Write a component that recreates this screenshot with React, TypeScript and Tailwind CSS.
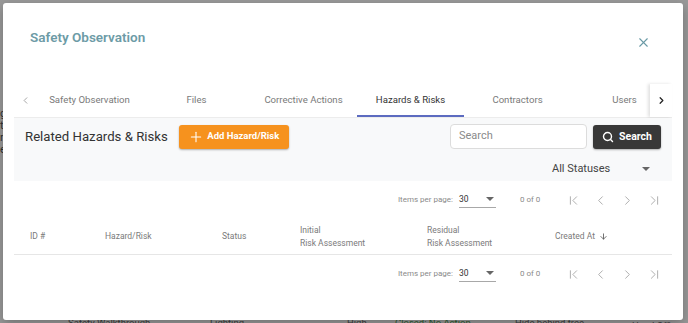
import React from "react";
import { ChevronLeft, ChevronRight, ChevronFirst, ChevronLast, Search, Plus, X, ArrowDown } from "lucide-react";

const Caret = ({ className = "" }: { className?: string }) => (
  <svg width="8" height="4" viewBox="0 0 8 4" className={className}>
    <path d="M0 0 L8 0 L4 4 Z" fill="currentColor" />
  </svg>
);

const Paginator = () => (
  <div className="flex items-center justify-end whitespace-nowrap pr-[4px] text-[8px] text-[#8a8a8a]">
    <span>Items per page:</span>
    <div className="ml-[6px] flex w-[37px] items-center justify-between border-b border-[#a8a8a8] pb-[2px] pt-[1px] text-[8.5px] text-[#333]">
      <span>30</span>
      <Caret className="mr-[2px] text-[#666]" />
    </div>
    <span className="ml-[24px] w-[22px] text-[8px]">0 of 0</span>
    <div className="ml-[18px] flex items-center text-[#aaa]">
      <span className="flex w-[27px] justify-center"><ChevronFirst size={15} strokeWidth={1.5} /></span>
      <span className="flex w-[27px] justify-center"><ChevronLeft size={15} strokeWidth={1.5} /></span>
      <span className="flex w-[27px] justify-center"><ChevronRight size={15} strokeWidth={1.5} /></span>
      <span className="flex w-[27px] justify-center"><ChevronLast size={15} strokeWidth={1.5} /></span>
    </div>
  </div>
);

export default function App() {
  const tabs = ["Safety Observation", "Files", "Corrective Actions", "Hazards & Risks", "Contractors", "Users"];
  return (
    <div className="relative h-[323px] w-[688px] overflow-hidden bg-[#999999]" style={{ fontFamily: "Roboto, 'Liberation Sans', sans-serif" }}>
      {/* background page fragments */}
      <div className="absolute left-0 top-[316px] h-[14px] w-full whitespace-nowrap text-[9.5px] text-[#3d3d3d]">
        <span className="absolute left-[68px] top-0">Safety Walkthrough</span>
        <span className="absolute left-[210px] top-0">Lighting</span>
        <span className="absolute left-[347px] top-0">High</span>
        <span className="absolute left-[395px] top-0 text-[#2f5a2f]">Closed: No Action</span>
        <span className="absolute left-[515px] top-0">Hide behind tree</span>
        <span className="absolute left-[632px] top-[3px]">Head Office</span>
      </div>
      <div className="absolute left-0 top-[108px] flex flex-col text-[11px] leading-[12px] text-[#333]">
        <span>g</span><span>t</span><span>r</span><span>e</span>
      </div>

      {/* modal */}
      <div className="absolute left-[3px] top-[3px] flex h-[317px] w-[680px] flex-col rounded-[3px] bg-white px-[11px] shadow-[0_4px_12px_rgba(0,0,0,0.25)]">
        {/* header */}
        <div className="flex h-[81px] items-start justify-between">
          <div className="ml-[16px] mt-[24px] text-[13.5px] font-semibold leading-[20px] text-[#6d9ba6]">Safety Observation</div>
          <X size={15} strokeWidth={1.8} className="mr-[21px] mt-[32px] text-[#6a9aa6]" />
        </div>

        {/* tabs */}
        <div className="flex h-[34px] border-b border-[#ececec]">
          <div className="flex w-[22px] items-center justify-center text-[#888]">
            <ChevronLeft size={11} strokeWidth={1.6} />
          </div>
          <div className="flex w-[614px] overflow-hidden">
            {tabs.map((t) => {
              const active = t === "Hazards & Risks";
              return (
                <div key={t} className={`relative flex w-[107px] shrink-0 items-center justify-center whitespace-nowrap pb-[1px] text-[9.6px] ${active ? "text-[#333]" : "text-[#7a7a7a]"}`}>
                  {t}
                  {active && <div className="absolute bottom-0 left-0 h-[2px] w-full bg-[#5c6bc0]" />}
                </div>
              );
            })}
          </div>
          <div className="flex w-[22px] items-center justify-center text-[#222] shadow-[-2px_0_3px_rgba(0,0,0,0.12)]">
            <ChevronRight size={11} strokeWidth={2.6} />
          </div>
        </div>

        {/* toolbar panel */}
        <div className="flex h-[63px] flex-col bg-[#f8f9fa] px-[11px] pt-[6px]">
          <div className="flex items-center">
            <span className="whitespace-nowrap pt-[1px] text-[13.2px] text-[#333]">Related Hazards &amp; Risks</span>
            <button className="ml-[11px] flex h-[24px] w-[110px] items-center justify-center gap-[3px] rounded-[3px] bg-[#f6921e] text-[9.5px] font-bold text-white shadow-[0_1px_2px_rgba(0,0,0,0.3)]">
              <Plus size={16} strokeWidth={1.6} />
              <span>Add Hazard/Risk</span>
            </button>
            <div className="ml-auto flex h-[25px] w-[137px] items-center rounded-[4px] border border-[#dcdcdc] bg-white pl-[8px] text-[11px] text-[#8a8a8a]">Search</div>
            <button className="ml-[6px] flex h-[24px] w-[68px] items-center justify-center gap-[5px] rounded-[3px] bg-[#383838] text-[10.5px] font-bold text-white shadow-[0_1px_2px_rgba(0,0,0,0.3)]">
              <Search size={12} strokeWidth={2.8} />
              <span>Search</span>
            </button>
          </div>
          <div className="mt-[12px] flex justify-end pr-[11px]">
            <div className="flex w-[98px] items-center justify-between text-[11px] text-[#444]">
              <span>All Statuses</span>
              <Caret className="text-[#666]" />
            </div>
          </div>
        </div>

        {/* top paginator */}
        <div className="flex h-[38px] items-center justify-end">
          <div className="w-full"><Paginator /></div>
        </div>

        {/* table header */}
        <div className="grid h-[36px] grid-cols-[75px_117px_78px_127px_128px_1fr] items-center border-b border-[#e6e6e6] pl-[16px] text-[8.5px] leading-[12.3px] text-[#7a7a7a]">
          <span>ID #</span>
          <span>Hazard/Risk</span>
          <span>Status</span>
          <span className="flex flex-col"><span>Initial</span><span>Risk Assessment</span></span>
          <span className="flex flex-col"><span>Residual</span><span>Risk Assessment</span></span>
          <span className="flex items-center gap-[4px]">Created At <ArrowDown size={9} strokeWidth={2.2} className="text-[#555]" /></span>
        </div>

        {/* bottom paginator */}
        <div className="flex h-[38px] items-center">
          <div className="w-full"><Paginator /></div>
        </div>
      </div>
    </div>
  );
}
